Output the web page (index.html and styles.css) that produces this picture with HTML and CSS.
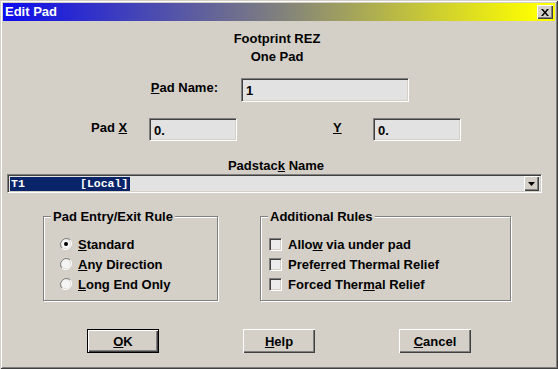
FILE: index.html
```html
<!DOCTYPE html>
<html lang="en">
<head>
  <meta charset="UTF-8">
  <title>Edit Pad</title>
  <link rel="stylesheet" href="styles.css">
</head>
<body>
  <div class="window">
    <div class="titlebar">
      <span class="title">Edit Pad</span>
      <span class="close">
        <svg width="8" height="7" viewBox="0 0 8 7"><path d="M0 0h2l2 2.5 2-2.5h2l-3 3.5 3 3.5h-2l-2-2.5-2 2.5h-2l3-3.5z" fill="#000"/></svg>
      </span>
    </div>

    <div class="dialog">
      <div class="heading">Footprint REZ</div>
      <div class="heading">One Pad</div>

      <div class="row-name">
        <label class="name-label"><u>P</u>ad Name:</label>
        <div class="field field-name">1</div>
      </div>

      <div class="row-xy">
        <label class="x-label">Pad <u>X</u></label>
        <div class="field field-xy">0.</div>
        <label class="y-label"><u>Y</u></label>
        <div class="field field-xy">0.</div>
      </div>

      <div class="padstack-label">Padstac<u>k</u> Name</div>
      <div class="combo">
        <span class="combo-sel">T1        [Local]</span>
        <span class="combo-btn">
          <svg width="7" height="4" viewBox="0 0 7 4"><path d="M0 0h7l-3.5 4z" fill="#000"/></svg>
        </span>
      </div>

      <div class="groups">
        <div class="group group-entry">
          <div class="legend">Pad Entry/Exit Rule</div>
          <div class="opt">
            <svg class="radio" width="12" height="12" viewBox="0 0 12 12">
              <path d="M10.2 1.8A6 6 0 0 0 1.8 10.2" fill="none" stroke="#808080" stroke-width="1"/>
              <circle cx="6" cy="6" r="4.5" fill="#f4f4f4"/>
              <path d="M1.8 10.2A6 6 0 0 0 10.2 1.8" fill="none" stroke="#fff" stroke-width="1"/>
              <circle cx="6" cy="6" r="2" fill="#000"/>
            </svg>
            <span><u>S</u>tandard</span>
          </div>
          <div class="opt">
            <svg class="radio" width="12" height="12" viewBox="0 0 12 12">
              <path d="M10.2 1.8A6 6 0 0 0 1.8 10.2" fill="none" stroke="#808080" stroke-width="1"/>
              <circle cx="6" cy="6" r="4.5" fill="#f4f4f4"/>
              <path d="M1.8 10.2A6 6 0 0 0 10.2 1.8" fill="none" stroke="#fff" stroke-width="1"/>
            </svg>
            <span><u>A</u>ny Direction</span>
          </div>
          <div class="opt">
            <svg class="radio" width="12" height="12" viewBox="0 0 12 12">
              <path d="M10.2 1.8A6 6 0 0 0 1.8 10.2" fill="none" stroke="#808080" stroke-width="1"/>
              <circle cx="6" cy="6" r="4.5" fill="#f4f4f4"/>
              <path d="M1.8 10.2A6 6 0 0 0 10.2 1.8" fill="none" stroke="#fff" stroke-width="1"/>
            </svg>
            <span><u>L</u>ong End Only</span>
          </div>
        </div>

        <div class="group group-rules">
          <div class="legend">Additional Rules</div>
          <div class="opt"><span class="check"></span><span>Allo<u>w</u> via under pad</span></div>
          <div class="opt"><span class="check"></span><span>Prefe<u>r</u>red Thermal Relief</span></div>
          <div class="opt"><span class="check"></span><span>Forced Ther<u>m</u>al Relief</span></div>
        </div>
      </div>

      <div class="buttons">
        <button class="btn btn-default"><u>O</u>K</button>
        <button class="btn"><u>H</u>elp</button>
        <button class="btn"><u>C</u>ancel</button>
      </div>
    </div>
  </div>
</body>
</html>
```

FILE: styles.css
```css
body {
  margin: 0;
  background: #d4d0c8;
  font-family: "Liberation Sans", Arial, sans-serif;
  font-size: 13px;
  font-weight: bold;
  color: #000;
}

.window {
  width: 558px;
  height: 369px;
  box-sizing: border-box;
  padding: 3px;
  background: #d4d0c8;
  box-shadow: inset 1px 1px 0 #d4d0c8, inset -1px -1px 0 #404040,
              inset 2px 2px 0 #fff, inset -2px -2px 0 #808080;
}

/* title bar */
.titlebar {
  height: 18px;
  display: flex;
  align-items: center;
  justify-content: space-between;
  padding: 0 2px 0 2px;
  background: linear-gradient(to right, #0c0cee, #80807e 50%, #ffff00 97%);
}

.title {
  color: #fff;
  font-size: 13px;
  line-height: 18px;
}

.close {
  width: 16px;
  height: 14px;
  box-sizing: border-box;
  display: flex;
  align-items: center;
  justify-content: center;
  background: #d4d0c8;
  box-shadow: inset 1px 1px 0 #fff, inset -1px -1px 0 #404040, inset -2px -2px 0 #808080;
}

/* dialog body */
.dialog {
  display: flex;
  flex-direction: column;
}

.heading {
  text-align: center;
  line-height: 18px;
  padding-right: 4px;
}

.heading:first-child {
  margin-top: 9px;
}

.field {
  height: 23px;
  box-sizing: border-box;
  padding: 3px 4px 0 4px;
  background: #e2e2e2;
  font-size: 13px;
  line-height: 17px;
  border: 1px solid;
  border-color: #808080 #fff #fff #808080;
  box-shadow: inset 1px 1px 0 #404040, inset -1px -1px 0 #d4d0c8;
}

.row-name {
  display: flex;
  align-items: center;
  margin-top: 12px;
  height: 24px;
}

.name-label {
  width: 215px;
  text-align: right;
  margin-right: 23px;
  margin-top: -5px;
}

.field-name {
  width: 168px;
  height: 24px;
}

.row-xy {
  display: flex;
  align-items: center;
  margin-top: 16px;
  height: 23px;
}

.x-label {
  margin-left: 88px;
  width: 58px;
  margin-top: -4px;
}

.field-xy {
  width: 88px;
}

.y-label {
  width: 136px;
  padding-left: 96px;
  box-sizing: border-box;
  margin-top: -4px;
}

.padstack-label {
  margin-top: 17px;
  line-height: 16px;
  text-align: center;
  padding-right: 6px;
}

/* combo box */
.combo {
  margin-left: 4px;
  width: 535px;
  height: 19px;
  box-sizing: border-box;
  display: flex;
  align-items: center;
  justify-content: space-between;
  padding: 2px 2px 2px 2px;
  background: #e2e2e2;
  border: 1px solid;
  border-color: #808080 #fff #fff #808080;
  box-shadow: inset 1px 1px 0 #404040, inset -1px -1px 0 #d4d0c8;
}

.combo-sel {
  height: 14px;
  padding: 0 2px 0 1px;
  background: #0a246a;
  color: #fff;
  font-family: "Liberation Mono", "Courier New", monospace;
  font-size: 11.5px;
  line-height: 14px;
  white-space: pre;
}

.combo-btn {
  width: 15px;
  height: 15px;
  box-sizing: border-box;
  display: flex;
  align-items: center;
  justify-content: center;
  background: #d4d0c8;
  box-shadow: inset 1px 1px 0 #fff, inset -1px -1px 0 #404040, inset -2px -2px 0 #808080;
}

/* group boxes */
.groups {
  display: flex;
  gap: 42px;
  margin-top: 23px;
  margin-left: 40px;
}

.group {
  height: 85px;
  box-sizing: border-box;
  display: flex;
  flex-direction: column;
  border: 1px solid #808080;
  box-shadow: inset 1px 1px 0 #fff, 1px 1px 0 #fff;
}

.group-entry {
  width: 175px;
  padding-left: 16px;
}

.group-rules {
  width: 251px;
  padding-left: 8px;
}

.legend {
  align-self: flex-start;
  margin-top: -8px;
  margin-bottom: 10px;
  padding: 0 2px;
  line-height: 15px;
  background: #d4d0c8;
}

.group-entry .legend {
  margin-left: -9px;
}

.group-rules .legend {
  margin-left: -1px;
}

.opt {
  display: flex;
  align-items: center;
  gap: 6px;
  height: 20px;
}

.radio {
  flex: none;
}

.check {
  flex: none;
  width: 13px;
  height: 13px;
  box-sizing: border-box;
  background: #ececec;
  border: 1px solid;
  border-color: #808080 #fff #fff #808080;
  box-shadow: inset 1px 1px 0 #404040, inset -1px -1px 0 #d4d0c8;
}

/* buttons */
.buttons {
  display: flex;
  gap: 84px;
  margin-top: 28px;
  margin-left: 84px;
}

.btn {
  width: 72px;
  height: 24px;
  padding: 0;
  border: none;
  background: #d4d0c8;
  font-family: "Liberation Sans", Arial, sans-serif;
  font-size: 13px;
  font-weight: bold;
  color: #000;
  box-shadow: inset 1px 1px 0 #fff, inset -1px -1px 0 #404040, inset -2px -2px 0 #808080;
}

.btn-default {
  box-shadow: inset 0 0 0 1px #000, inset 2px 2px 0 #fff,
              inset -2px -2px 0 #404040, inset -3px -3px 0 #808080;
}
```
